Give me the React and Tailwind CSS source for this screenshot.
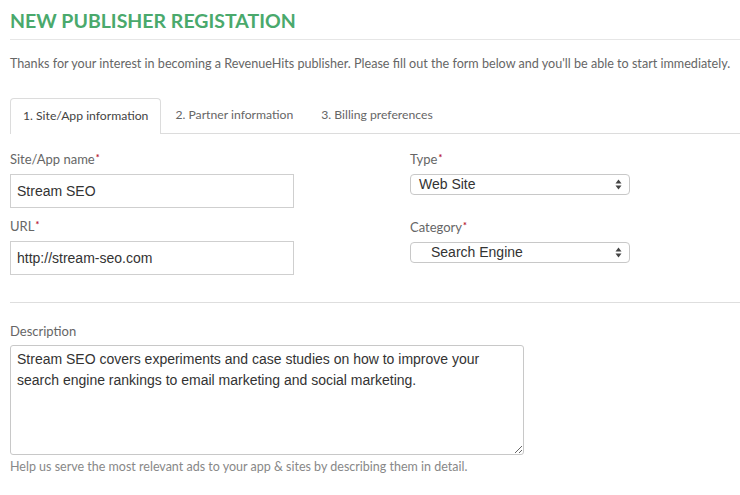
import { useState } from 'react'

const labelFont = { fontFamily: 'Lato, "Open Sans", sans-serif' }
const inputFont = { fontFamily: '"Liberation Sans", Arial, sans-serif' }

function Req() {
  return <span className="text-[#b5122e] text-[9px] font-bold align-top relative -top-[1px] ml-[1px]">*</span>
}

function SelectArrows() {
  return (
    <svg width="7" height="11" viewBox="0 0 7 11" className="absolute right-[7px] top-[4px]">
      <path d="M3.5 0.5 L6.5 4.5 L0.5 4.5 Z" fill="#444" />
      <path d="M3.5 10.5 L6.5 6.5 L0.5 6.5 Z" fill="#444" />
    </svg>
  )
}

export default function App() {
  const [tab] = useState(0)
  const tabs = ['1. Site/App information', '2. Partner information', '3. Billing preferences']

  return (
    <div className="w-[740px] h-[495px] bg-white overflow-hidden pl-[10px]" style={labelFont}>
      <div className="pt-[9px] pb-[6px] border-b border-[#e6e6e6]">
        <h1 className="text-[19.5px] font-bold text-[#4aa96c] leading-[24px]">NEW PUBLISHER REGISTATION</h1>
      </div>

      <p className="mt-[16px] text-[12.6px] text-[#666] leading-[16px]">
        Thanks for your interest in becoming a RevenueHits publisher. Please fill out the form below and you'll be able to start immediately.
      </p>

      {/* tabs */}
      <div className="mt-[26px] flex border-b border-[#dcdcdc] h-[36px]">
        {tabs.map((t, i) => (
          <div
            key={t}
            className={`text-[12.2px] flex items-center ${
              i === tab
                ? 'px-[12px] border border-b-0 border-[#dcdcdc] rounded-t-[4px] bg-white -mb-[1px] h-[36px] text-[#444]'
                : 'px-[14px] text-[#666]'
            }`}
          >
            {t}
          </div>
        ))}
      </div>

      {/* fields */}
      <div className="flex pr-[10px]">
        <div className="w-[400px]">
          <div className="mt-[17px] text-[13px] text-[#666] leading-[16px]">Site/App name<Req /></div>
          <input
            readOnly
            value="Stream SEO"
            className="mt-[7px] w-[284px] h-[34px] border border-[#cfcfcf] px-[6px] text-[14px] text-[#333] outline-none"
            style={inputFont}
          />
          <div className="mt-[10px] text-[13px] text-[#666] leading-[16px]">URL<Req /></div>
          <input
            readOnly
            value="http://stream-seo.com"
            className="mt-[7px] w-[284px] h-[34px] border border-[#cfcfcf] px-[6px] text-[14px] text-[#333] outline-none"
            style={inputFont}
          />
        </div>
        <div>
          <div className="mt-[17px] text-[13px] text-[#666] leading-[16px]">Type<Req /></div>
          <div
            className="relative mt-[7px] w-[220px] h-[21px] border border-[#c8c8c8] rounded-[4px] pl-[8px] text-[14px] text-[#333] leading-[19px]"
            style={inputFont}
          >
            Web Site
            <SelectArrows />
          </div>
          <div className="mt-[24px] text-[13px] text-[#666] leading-[16px]">Category<Req /></div>
          <div
            className="relative mt-[7px] w-[220px] h-[21px] border border-[#c8c8c8] rounded-[4px] pl-[20px] text-[14px] text-[#333] leading-[19px]"
            style={inputFont}
          >
            Search Engine
            <SelectArrows />
          </div>
        </div>
      </div>

      <div className="mt-[27px] border-t border-[#dedede]" />

      <div className="mt-[20px] text-[13px] text-[#666] leading-[16px]">Description</div>
      <textarea
        readOnly
        value="Stream SEO covers experiments and case studies on how to improve your search engine rankings to email marketing and social marketing."
        className="mt-[6px] block w-[514px] h-[110px] border border-[#c8c8c8] rounded-[3px] px-[6px] pt-[3px] text-[14px] leading-[21px] text-[#333] outline-none resize"
        style={inputFont}
      />
      <div className="mt-[4px] text-[12.5px] text-[#888] leading-[16px]">
        Help us serve the most relevant ads to your app &amp; sites by describing them in detail.
      </div>
    </div>
  )
}
